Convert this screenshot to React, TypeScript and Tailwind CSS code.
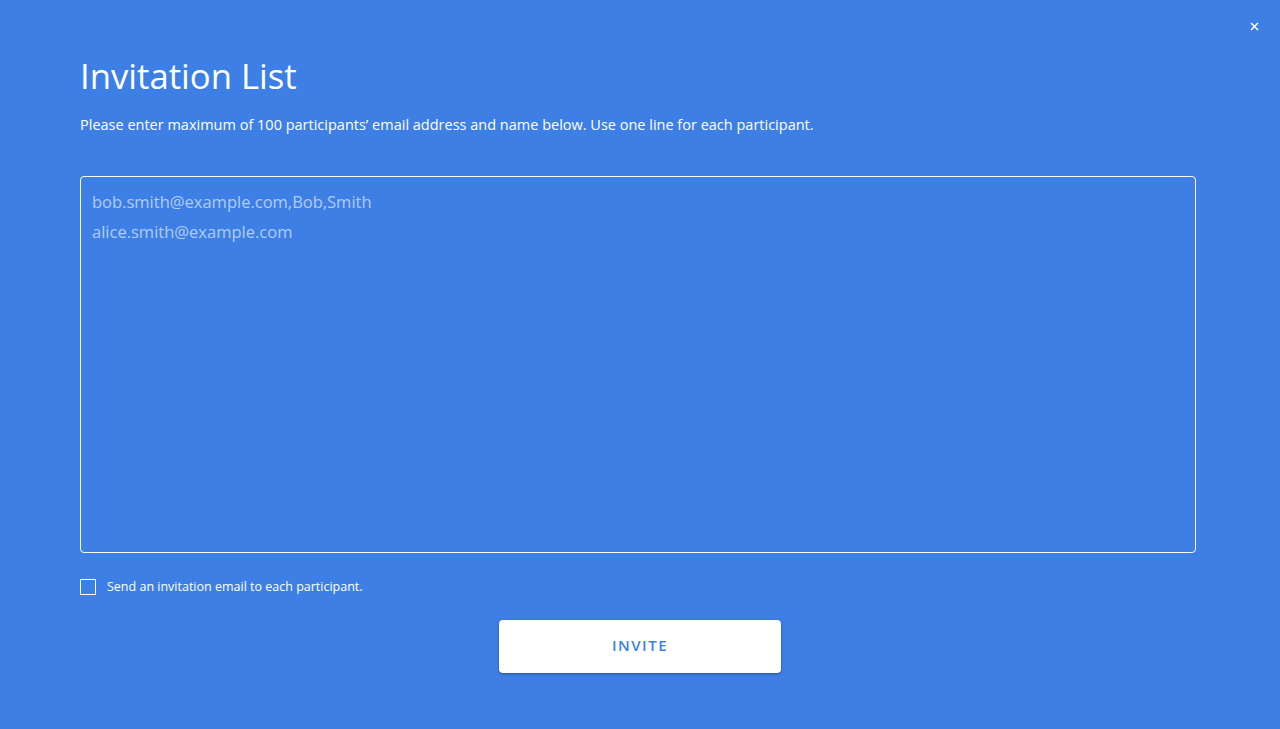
import React, { useState } from 'react';

export default function App() {
  const [list, setList] = useState('');
  const [sendEmail, setSendEmail] = useState(false);

  return (
    <main
      className="relative min-h-[729px] w-full bg-[#3e7fe5] text-white"
      style={{ fontFamily: '"Open Sans", "Noto Sans", sans-serif' }}
    >
      <button
        type="button"
        aria-label="Close"
        className="absolute right-[20px] top-[20px] flex h-[12px] w-[12px] items-center justify-center"
      >
        <svg width="9" height="9" viewBox="0 0 9 9" fill="none">
          <path d="M1 1L8 8M8 1L1 8" stroke="white" strokeWidth="1.5" />
        </svg>
      </button>

      <div className="flex flex-col px-20 pt-[52px]">
        <h1 className="text-[34.7px] font-normal leading-[48px]">Invitation List</h1>
        <p className="mt-[15px] text-[14.5px] leading-[20px]">
          Please enter maximum of 100 participants’ email address and name below. Use one line for each participant.
        </p>

        <textarea
          value={list}
          onChange={(e) => setList(e.target.value)}
          placeholder={'bob.smith@example.com,Bob,Smith\nalice.smith@example.com'}
          className="mt-[41px] h-[377px] w-[1116px] resize-none rounded-[4px] border border-white bg-transparent px-[11px] pt-[10px] text-[16.5px] leading-[30px] text-white outline-none placeholder:text-white/60"
        />

        <label className="mt-[26px] flex cursor-pointer items-center gap-[11px]">
          <input
            type="checkbox"
            checked={sendEmail}
            onChange={(e) => setSendEmail(e.target.checked)}
            className="h-[16px] w-[16px] appearance-none border border-white bg-transparent checked:bg-white"
          />
          <span className="text-[12.5px] leading-[16px]">Send an invitation email to each participant.</span>
        </label>

        <div className="mt-[25px] flex w-[1120px] justify-center">
          <button
            type="button"
            className="h-[53px] w-[282px] rounded-[4px] bg-white pb-[3px] text-[15px] font-semibold tracking-[1.5px] text-[#3e7fe5] shadow-[0_1px_3px_rgba(0,0,0,0.35)]"
          >
            INVITE
          </button>
        </div>
      </div>
    </main>
  );
}
